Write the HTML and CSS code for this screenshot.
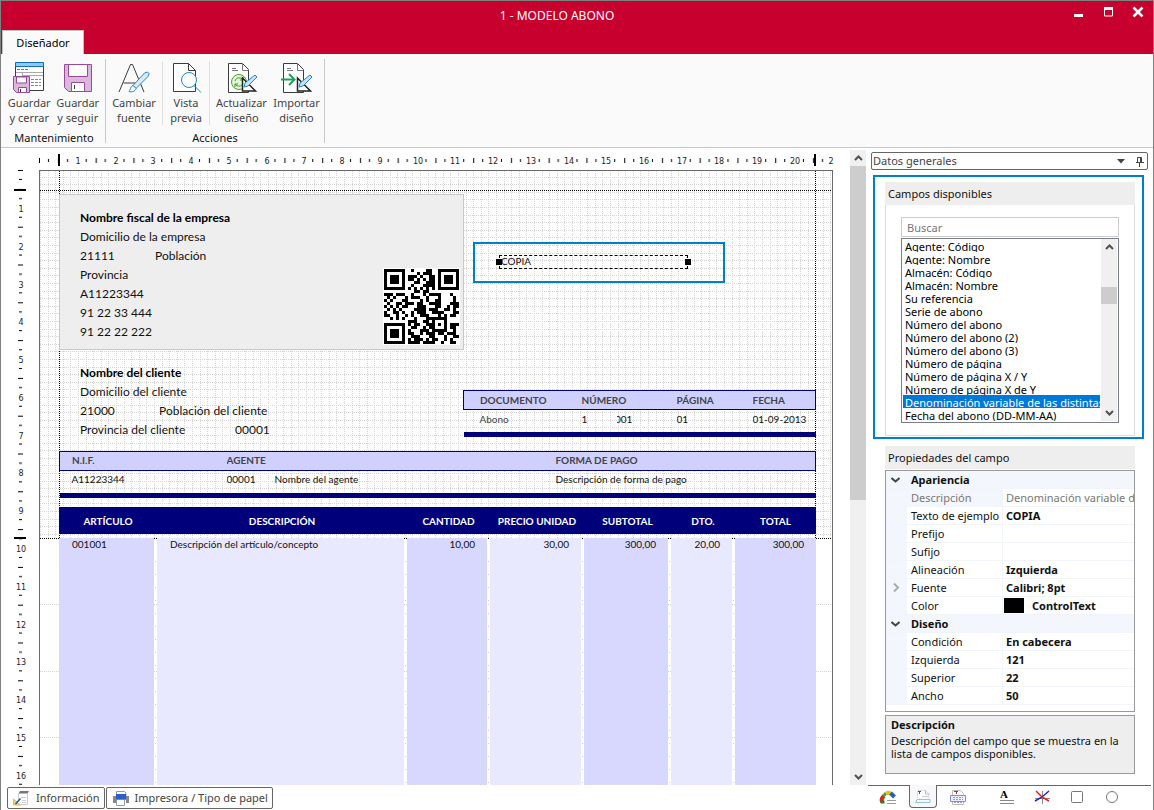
FILE: index.html
```html
<!DOCTYPE html>
<html lang="es">
<head>
<meta charset="utf-8">
<title>1 - MODELO ABONO</title>
<link rel="stylesheet" href="styles.css">
</head>
<body>
<div class="window">
  <header class="titlebar">
    <h1 class="title">1 - MODELO ABONO</h1>
    <div class="window-buttons">
      <button type="button" aria-label="Minimizar"><svg width="12" height="12"><path d="M2 9.500h9" stroke="#fff" stroke-width="3"/></svg></button>
      <button type="button" aria-label="Maximizar"><svg width="12" height="12"><path d="M2.500 3h8v7h-8z" stroke="#fff" fill="none"/><path d="M2 2.500h9" stroke="#fff" stroke-width="3"/></svg></button>
      <button type="button" aria-label="Cerrar"><svg width="12" height="12"><path d="M1.500 1.500l9 9M10.500 1.500l-9 9" stroke="#fff" stroke-width="2.500"/></svg></button>
    </div>
    <button type="button" class="ribbon-tab">Diseñador</button>
  </header>

  <nav class="ribbon">
    <section class="group">
      <div class="group-items">
        <button type="button" class="tool">
          <svg width="34" height="34" viewBox="0 0 34 34" fill="none"><path d="M3.500 2.500h28v27h-28z" fill="#fff" stroke="#3b3b3b"/><path d="M3.500 1.500h28v4h-28z" fill="#91c8f6" stroke="#1070b8"/><path d="M5 8.500h12" stroke="#777" stroke-dasharray="3 1"/><path d="M19 18.500h10M19 21.500h10M19 24.500h10" stroke="#888" stroke-dasharray="3 1"/><path d="M4 11.500h27M10 14.500h21M10.500 12v4" stroke="#aaa"/><path d="M1.500 15.500h16v16H4.500l-3-3z" fill="#dbb8db" stroke="#9b4a9b"/><path d="M4.500 16h10v6h-10zM6.500 26.500h8v5h-8z" fill="#fff" stroke="#9b4a9b"/><path d="M8.500 28v3" stroke="#3b3b3b"/></svg>
          <span>Guardar<br>y cerrar</span></button>
        <button type="button" class="tool">
          <svg width="34" height="34" viewBox="0 0 34 34" fill="none"><path d="M3.500 3.500h27v27H7.500l-4-4z" fill="#dbb8db" stroke="#9b4a9b"/><path d="M7.500 3.500h19v12h-19zM10.500 21.500h13v9h-13z" fill="#fff" stroke="#9b4a9b"/><path d="M13.500 24v4" stroke="#3b3b3b"/></svg>
          <span>Guardar<br>y seguir</span></button>
      </div>
      <h2 class="group-name">Mantenimiento</h2>
    </section>
    <section class="group actions">
      <div class="group-items">
        <button type="button" class="tool">
          <svg width="34" height="34" viewBox="0 0 34 34" fill="none"><path d="M2 31L13.500 3.500h2L27 31M6.500 22h16" stroke="#3b3b3b"/><path d="M27.500 12l3-1 1.500 1.500-1 3-12 12-3-3z" fill="#d6eafa" stroke="#2284cc"/><path d="M16 24.500l3 3c-1 3-4 4-7 3 1.500-1 1-5 4-6z" fill="#fff" stroke="#2284cc"/></svg>
          <span>Cambiar<br>fuente</span></button>
        <button type="button" class="tool split">
          <svg width="34" height="34" viewBox="0 0 34 34" fill="none"><path d="M26.500 30.500h-22v-28h15l7 7z" fill="#fff" stroke="#3b3b3b"/><path d="M19.500 2.500v7h7" stroke="#3b3b3b"/><circle cx="20" cy="19" r="7.500" fill="#fff" stroke="#2284cc"/><path d="M25 24.500l7 7" stroke="#2284cc"/></svg>
          <span>Vista<br>previa</span></button>
        <button type="button" class="tool split">
          <svg width="34" height="34" viewBox="0 0 34 34" fill="none"><path d="M3.500 2.500h14l6 6v23h-20z" fill="#fff" stroke="#3b3b3b"/><path d="M17.500 2.500v7h6M7 7.500h4m-4 2h6" stroke="#777"/><circle cx="14" cy="21" r="7.500" fill="#e2f6da" stroke="#4aa530"/><path d="M10 20c1-4 6-4 8-1m0-3v3h-3M18 22c-1 4-6 4-8 1m0 3v-3h3" stroke="#3b9a25"/><path d="M17.500 17v13h13z" fill="#fff" stroke="#222" stroke-width="1.500"/><path d="M30 14l2 2-9 9-4 1 1-4z" fill="#c8e2f8" stroke="#2284cc"/></svg>
          <span>Actualizar<br>diseño</span></button>
        <button type="button" class="tool">
          <svg width="34" height="34" viewBox="0 0 34 34" fill="none"><path d="M3.500 2.500h14l6 6v23h-20z" fill="#fff" stroke="#3b3b3b"/><path d="M17.500 2.500v7h6M7 7.500h4m-4 2h6" stroke="#777"/><path d="M1 18.500h13M9 13l5.500 5.500L9 24" stroke="#22a05a" stroke-width="2"/><path d="M17.500 17v13h13z" fill="#fff" stroke="#222" stroke-width="1.500"/><path d="M30 14l2 2-9 9-4 1 1-4z" fill="#c8e2f8" stroke="#2284cc"/></svg>
          <span>Importar<br>diseño</span></button>
      </div>
      <h2 class="group-name">Acciones</h2>
    </section>
  </nav>

  <main class="workspace">
    <section class="editor">
      <div class="viewport">
        <div class="sheet">
          <svg class="ruler-h" width="796" height="20" aria-hidden="true">
            <defs><pattern id="tick-h" width="37.750" height="20" patternUnits="userSpaceOnUse" x="0"><path d="M19 8h1v5h-1zM9 9h1v3H9zM28 9h1v3h-1z"/></pattern></defs>
            <rect x="0" width="794" height="20" fill="url(#tick-h)"/>
            <path d="M0 8h1v5H0zM19 4h2v12h-2zM775 4h2v12h-2z"/>
            <g text-anchor="middle"><text x="39" y="14">1</text><text x="77" y="14">2</text><text x="114" y="14">3</text><text x="152" y="14">4</text><text x="190" y="14">5</text><text x="228" y="14">6</text><text x="265" y="14">7</text><text x="303" y="14">8</text><text x="341" y="14">9</text><text x="379" y="14">10</text><text x="416" y="14">11</text><text x="454" y="14">12</text><text x="492" y="14">13</text><text x="530" y="14">14</text><text x="567" y="14">15</text><text x="605" y="14">16</text><text x="643" y="14">17</text><text x="680" y="14">18</text><text x="718" y="14">19</text><text x="756" y="14">20</text><text x="792" y="14">2</text></g>
          </svg>
          <svg class="ruler-v" width="39" height="640" aria-hidden="true">
            <defs><pattern id="tick-v" width="39" height="37.800" patternUnits="userSpaceOnUse"><path d="M17 19h5v1h-5zM18 9h3v1h-3zM18 28h3v1h-3z"/></pattern></defs>
            <rect width="39" height="640" fill="url(#tick-v)"/>
            <path d="M17 0h5v1h-5zM13 19h12v2H13zM13 367h12v2H13z"/>
            <g text-anchor="middle"><text x="20" y="42">1</text><text x="20" y="80">2</text><text x="20" y="118">3</text><text x="20" y="155">4</text><text x="20" y="193">5</text><text x="20" y="231">6</text><text x="20" y="269">7</text><text x="20" y="306">8</text><text x="20" y="344">9</text><text x="20" y="382">10</text><text x="20" y="420">11</text><text x="20" y="458">12</text><text x="20" y="495">13</text><text x="20" y="533">14</text><text x="20" y="571">15</text><text x="20" y="609">16</text></g>
          </svg>
          <div class="paper">
            <svg class="grid-lines" width="792" height="640" aria-hidden="true" shape-rendering="crispEdges">
              <defs>
                <pattern id="dots" width="38" height="38" patternUnits="userSpaceOnUse"><path d="M8.500 0v38M15.500 0v38M23.500 0v38M30.500 0v38M.5 0v38M0 6.500h38M0 13.500h38M0 21.500h38M0 28.500h38M0 36.500h38" stroke="#d4d4d4" stroke-dasharray="1 1"/></pattern>
                <pattern id="gutter" width="792" height="13" patternUnits="userSpaceOnUse"><path d="M115 0h1v1h-1zM365 0h1v1h-1zM448 0h1v1h-1zM542 0h1v1h-1zM629 0h1v1h-1zM693 0h1v1h-1z" fill="#ccc"/></pattern>
              </defs>
              <rect width="792" height="367" fill="url(#dots)"/>
              <rect y="380" width="792" height="260" fill="url(#gutter)"/>
              <path d="M0 433.500h792M0 500.500h792M0 566.500h792" stroke="#d4d4d4" stroke-dasharray="1 1"/>
              <path d="M0 19.500h792M0 367.500h792M19.500 0v640M775.500 0v640" stroke="#000" stroke-dasharray="1 1"/>
            </svg>

            <div class="item company">
              <div class="address">
                <b>Nombre fiscal de la empresa</b>
                <span>Domicilio de la empresa</span>
                <span class="pair"><span>21111</span><span>Población</span></span>
                <span>Provincia</span>
                <span>A11223344</span>
                <span>91 22 33 444</span>
                <span>91 22 22 222</span>
              </div>
              <svg class="qr" width="77" height="77" viewBox="-.33 -.33 25.66 25.66" shape-rendering="crispEdges" role="img" aria-label="Código QR">
                <path fill="#fff" d="M-1-1h27v27H-1z"/>
                <path fill="none" stroke="#000" d="M.5.5h6v6h-6zM18.500.5h6v6h-6zM.5 18.500h6v6h-6zM16.500 16.500h4v4h-4z"/>
                <path d="M2 2h3v3H2zM20 2h3v3h-3zM2 20h3v3H2zM18 18h1v1h-1z"/>
                <path fill="none" stroke="#000" d="M9 .5h1m4 0h2M11 1.500h1m1 0h3M8 2.500h3m1 0h1m2 0h2M8 3.500h2m1 0h1m1 0h1m1 0h2M10 4.500h2m2 0h3M9 5.500h1m3 0h4M8 6.500h1m1 0h1m1 0h1m1 0h1m1 0h1M10 7.500h2m1 0h2M0 8.500h3m1 0h3m2 0h1m3 0h1m1 0h4m3 0h1M1 9.500h1m1 0h1m3 0h1m1 0h3m2 0h1m3 0h1m4 0h1M0 10.500h1m1 0h1m3 0h2m4 0h1m1 0h1m2 0h2m4 0h1M1 11.500h1m2 0h2m1 0h3m1 0h2m2 0h4m3 0h3M0 12.500h1m1 0h1m1 0h1m1 0h2m3 0h3m3 0h2m2 0h1m1 0h2M1 13.500h1m1 0h1m1 0h1m4 0h4m1 0h3m2 0h2m1 0h1M0 14.500h1m2 0h2m1 0h1m2 0h1m1 0h3m2 0h4m3 0h2M0 15.500h2m2 0h1m2 0h1m1 0h1m2 0h3m3 0h1m1 0h1m1 0h2M2 16.500h1m1 0h1m1 0h1m3 0h1m3 0h2M8 17.500h3m2 0h2M8 18.500h1m1 0h2m2 0h2m6 0h3M9 19.500h2m2 0h1m1 0h1m6 0h2M8 20.500h1m3 0h3m8 0h1M8 21.500h2m2 0h1m1 0h3m1 0h2m1 0h3M9 22.500h3m3 0h2m3 0h1m2 0h2M8 23.500h1m1 0h3m1 0h1m1 0h2m2 0h1m1 0h1M8 24.500h4m1 0h4m2 0h1m2 0h2"/>
              </svg>
            </div>

            <div class="item customer address">
              <b>Nombre del cliente</b>
              <span>Domicilio del cliente</span>
              <span class="pair"><span>21000</span><span>Población del cliente</span></span>
              <span class="pair province"><span>Provincia del cliente</span><span>00001</span></span>
            </div>

            <div class="item highlight"><div class="field">COPIA</div></div>

            <table class="item doc">
              <thead><tr><th class="c-doc">DOCUMENTO</th><th class="c-num">NÚMERO</th><th class="c-page">PÁGINA</th><th>FECHA</th></tr></thead>
              <tbody><tr><td class="kind">Abono</td><td><span class="serial"><span>1</span><span class="clip"><span>001</span></span></span></td><td>01</td><td>01-09-2013</td></tr></tbody>
            </table>

            <table class="item payment">
              <thead><tr><th class="c-nif">N.I.F.</th><th class="c-agent">AGENTE</th><th>FORMA DE PAGO</th></tr></thead>
              <tbody><tr><td>A11223344</td><td><span class="agent"><span>00001</span><span>Nombre del agente</span></span></td><td>Descripción de forma de pago</td></tr></tbody>
            </table>

            <table class="item lines">
              <colgroup><col class="w-art"><col class="w-desc"><col class="w-qty"><col class="w-price"><col class="w-sub"><col class="w-dto"><col class="w-total"></colgroup>
              <thead><tr><th>ARTÍCULO</th><th>DESCRIPCIÓN</th><th>CANTIDAD</th><th>PRECIO UNIDAD</th><th>SUBTOTAL</th><th>DTO.</th><th>TOTAL</th></tr></thead>
              <tbody><tr><td><div>001001</div></td><td><div>Descripción del artículo/concepto</div></td><td><div>10,00</div></td><td><div>30,00</div></td><td><div>300,00</div></td><td><div>20,00</div></td><td><div>300,00</div></td></tr></tbody>
            </table>
          </div>
        </div>
        <div class="scrollbar">
          <button type="button" aria-label="Subir"><svg width="9" height="6"><path d="M1 5l3.500-3.500L8 5" fill="none" stroke="#505050" stroke-width="2"/></svg></button>
          <div class="track"><div class="thumb"></div></div>
          <button type="button" aria-label="Bajar"><svg width="9" height="6"><path d="M1 1l3.500 3.500L8 1" fill="none" stroke="#505050" stroke-width="2"/></svg></button>
        </div>
      </div>
      <footer class="footer">
        <button type="button"><svg width="18" height="18" fill="none"><path d="M7 2h9l-1.500 2.500h-9z" fill="#777"/><path d="M5.500 4v7M14.500 5v10.500h-7" stroke="#ccc"/><path d="M8 8.500h5M9 11.500h4M9 13.500h4" stroke="#ccc"/><path d="M.5 10v6h7z" fill="#f5d080" stroke="#e8b850"/><path d="M2.500 15l5-5.500" stroke="#15609c" stroke-width="1.500"/></svg>Información</button>
        <button type="button"><svg width="18" height="18" fill="none"><path d="M4.500 7V2.500h8L14 4v3M4.500 11v5.500h8V11" fill="#fff" stroke="#999"/><path d="M1 7h16v7h-3v-3H4v3H1z" fill="#888"/><path d="M4 5h10v5H4z" fill="#2860c8"/></svg>Impresora / Tipo de papel</button>
      </footer>
    </section>

    <aside class="side">
      <div class="side-body">
        <div class="caption"><span>Datos generales</span>
          <button type="button" aria-label="Opciones"><svg width="8" height="5"><path d="M0 0h8L4 4.500z" fill="#444"/></svg></button>
          <button type="button" aria-label="Anclar"><svg width="9" height="11"><path d="M2.500 6V1.500h4V6M1 6.500h8M4.500 7v4M5.500 1v5" fill="none" stroke="#444"/></svg></button>
        </div>
        <section class="fields-frame">
          <h2 class="panel-title">Campos disponibles</h2>
          <div class="fields-body">
            <input class="search" type="search" placeholder="Buscar" aria-label="Buscar">
            <div class="listbox">
              <select size="14" aria-label="Campos disponibles">
                <option>Agente: Código</option><option>Agente: Nombre</option><option>Almacén: Código</option><option>Almacén: Nombre</option><option>Su referencia</option><option>Serie de abono</option><option>Número del abono</option><option>Número del abono (2)</option><option>Número del abono (3)</option><option>Número de página</option><option>Número de página X / Y</option><option>Número de página X de Y</option><option selected>Denominación variable de las distintas copias</option><option>Fecha del abono (DD-MM-AA)</option>
              </select>
              <div class="scrollbar small">
                <button type="button" aria-label="Subir"><svg width="9" height="6"><path d="M1 5l3.500-3.500L8 5" fill="none" stroke="#505050" stroke-width="2"/></svg></button>
                <div class="track"><div class="thumb"></div></div>
                <button type="button" aria-label="Bajar"><svg width="9" height="6"><path d="M1 1l3.500 3.500L8 1" fill="none" stroke="#505050" stroke-width="2"/></svg></button>
              </div>
            </div>
          </div>
        </section>
        <section class="props">
          <h2 class="panel-title">Propiedades del campo</h2>
          <div class="prop-box">
            <table class="prop-grid">
              <colgroup><col class="p-mark"><col class="p-name"><col></colgroup>
              <tr class="cat"><td><svg width="9" height="6"><path d="M.5 1l4 3.500 4-3.500" fill="none" stroke="#444" stroke-width="2"/></svg></td><th colspan="2">Apariencia</th></tr>
              <tr class="off"><td></td><th>Descripción</th><td>Denominación variable de las</td></tr>
              <tr><td></td><th>Texto de ejemplo</th><td>COPIA</td></tr>
              <tr><td></td><th>Prefijo</th><td></td></tr>
              <tr><td></td><th>Sufijo</th><td></td></tr>
              <tr><td></td><th>Alineación</th><td>Izquierda</td></tr>
              <tr><td><svg width="9" height="9"><path d="M3 .5l4 4-4 4" fill="none" stroke="#aaa" stroke-width="2"/></svg></td><th>Fuente</th><td>Calibri; 8pt</td></tr>
              <tr><td></td><th>Color</th><td class="color-cell"><span class="color"><i class="swatch"></i>ControlText</span></td></tr>
              <tr class="cat"><td><svg width="9" height="6"><path d="M.5 1l4 3.500 4-3.500" fill="none" stroke="#444" stroke-width="2"/></svg></td><th colspan="2">Diseño</th></tr>
              <tr><td></td><th>Condición</th><td>En cabecera</td></tr>
              <tr><td></td><th>Izquierda</th><td>121</td></tr>
              <tr><td></td><th>Superior</th><td>22</td></tr>
              <tr><td></td><th>Ancho</th><td>50</td></tr>
            </table>
          </div>
          <div class="help"><b>Descripción</b><p>Descripción del campo que se muestra en la lista de campos disponibles.</p></div>
        </section>
      </div>
      <nav class="side-tabs">
        <button type="button" aria-label="Datos generales"><svg width="18" height="18" fill="none"><path d="M3 14c-1-3 0-4 2-6" stroke="#d8281c" stroke-width="4"/><path d="M3.500 15.500v-3" stroke="#20803c" stroke-width="4"/><path d="M4.500 8l2.500-3" stroke="#39a845" stroke-width="3"/><path d="M7 5.500c2-1 3-1 4.500 0" stroke="#f2bd22" stroke-width="4"/><path d="M11.500 5l4 4" stroke="#2463b4" stroke-width="4"/><path d="M8 12.500h9M8 15.500h9" stroke="#999"/></svg></button>
        <button type="button" class="current" aria-label="Cabecera"><svg width="18" height="18" fill="none"><path d="M3.500 11V3.500h8l3 3V11" fill="#fff" stroke="#ddd"/><path d="M4 4.500h3M5.500 4v3" stroke="#d02020"/><path d="M11.500 3v4h4" stroke="#bbb"/><path d="M8 9.500h6" stroke="#ccc"/><path d="M3 12.500h13v3H1.500z" fill="#f4f8fc" stroke="#8cc4ea"/></svg></button>
        <button type="button" aria-label="Cuerpo"><svg width="18" height="18" fill="none"><path d="M3.500 16.500v-14h8l3 3v11z" fill="#fff" stroke="#bbb"/><path d="M5 3.500h4M7.500 3v3" stroke="#d02020"/><path d="M1.500 7.500h15v6h-15z" fill="#eeeeff" stroke="#8888e8"/><path d="M4 9.500h10M4 11.500h10M5 14.500h8" stroke="#9999d8" stroke-dasharray="2 1"/></svg></button>
        <button type="button" class="gap" aria-label="Texto"><svg width="18" height="18"><text x="2" y="10">A</text><path d="M2 12.500h14M2 15.500h14" stroke="#888"/></svg></button>
        <button type="button" aria-label="Línea"><svg width="18" height="18" fill="none"><path d="M2 10.500h15M9.500 3v13" stroke="#888"/><path d="M2 13L9 9 16 3" stroke="#2020e0" stroke-width="1.500"/><path d="M3 3l6 6 7 4" stroke="#e82020" stroke-width="1.500"/></svg></button>
        <button type="button" aria-label="Rectángulo"><svg width="18" height="18"><rect x="3.500" y="3.500" width="11" height="11" rx="1" fill="none" stroke="#777"/></svg></button>
        <button type="button" aria-label="Elipse"><svg width="18" height="18"><circle cx="9" cy="9" r="5.500" fill="none" stroke="#777"/></svg></button>
      </nav>
    </aside>
  </main>
</div>
</body>
</html>
```
FILE: styles.css
```css
* { box-sizing: border-box; }
html, body { height: 100%; margin: 0; }
body { font: 11px/18px "Noto Sans", "Open Sans", sans-serif; color: #111; background: #fff; }
button { font: inherit; color: inherit; background: none; border: 0; padding: 0; }
h1, h2, p { margin: 0; font-weight: 400; }
svg { display: block; }
table { border-collapse: collapse; table-layout: fixed; }
th, td { padding: 0; text-align: left; font-weight: 400; white-space: nowrap; overflow: hidden; }

.window { height: 100vh; display: flex; flex-direction: column; border: 1px solid #808080; border-bottom: 0; overflow: hidden; }

.titlebar { height: 53px; flex: none; background: #c8002d; display: grid; grid-template-columns: 1fr auto 1fr; grid-template-rows: 29px 24px; }
.title { grid-column: 2; color: #fff; font-size: 12px; line-height: 30px; margin-right: 40px; }
.window-buttons { grid-column: 3; display: flex; gap: 18px; padding: 5px 9px 0 0; justify-content: flex-end; align-items: flex-start; }
.ribbon-tab { grid-column: 1; grid-row: 2; justify-self: start; width: 82px; margin-left: 1px; background: #fafafa; border: 1px solid #c0c0c0; border-bottom: 0; color: #000; }

.ribbon { height: 94px; flex: none; display: flex; padding: 5px 0 4px 2px; background: #fafafa; border-bottom: 1px solid #c8c8c8; }
.group { display: flex; flex-direction: column; justify-content: space-between; width: 103px; border-right: 1px solid #c8c8c8; }
.actions { width: 219px; }
.group-items { display: flex; height: 66px; padding: 2px 3px 0 2px; }
.actions .group-items { padding: 2px 0 0; }
.tool { flex: 1; display: flex; flex-direction: column; align-items: center; color: #444; line-height: 15px; white-space: nowrap; }
.actions .tool { flex: 0 0 53px; }
.actions .tool:first-child { flex-basis: 56px; }
.actions .split { flex-basis: 47px; border-left: 1px solid #e0e0e0; }
.actions .split + .split { flex-basis: 61px; padding-left: 3px; }
.group-name { font-size: 11px; line-height: 10px; text-align: center; }

.workspace { flex: 1; min-height: 0; display: flex; }
.editor { flex: 1; min-width: 0; display: flex; flex-direction: column; }
.viewport { flex: 1; min-height: 0; display: flex; justify-content: space-between; padding-top: 2px; }
.sheet { display: grid; grid-template-columns: 38px auto; grid-template-rows: 20px auto; overflow: hidden; }
.ruler-h { grid-column: 2; }
.ruler-v { grid-column: 1; grid-row: 2; }
.ruler-h text, .ruler-v text { font: 8px "DejaVu Sans", sans-serif; fill: #222; }

/* A4 sheet: canvas whose items are placed by their report coordinates */
.paper { position: relative; width: 794px; height: 1123px; border: 1px solid #6a6a6a; font: 12px/19px Lato, sans-serif; }
.grid-lines { position: absolute; left: 0; top: 0; }
.item { position: absolute; }
.address { display: flex; flex-direction: column; color: #111; }
.address b { color: #000; }
.pair { display: flex; white-space: nowrap; }
.pair span:first-child { width: 79px; }
.company { left: 19px; top: 23px; width: 405px; height: 156px; display: flex; justify-content: space-between; align-items: flex-end; background: #eee; border: 1px solid #c8c8c8; padding: 0 3px 4px 20px; }
.company .address { align-self: flex-start; padding-top: 13px; }
.company .pair span:first-child { width: 75px; }
.customer { left: 40px; top: 192px; }
.customer .province span:first-child { width: 155px; }
.highlight { left: 433px; top: 71px; width: 252px; height: 41px; border: 2px solid #0080c8; padding: 11px 35px 13px 24px; }
.field { position: relative; height: 14px; border: 1px dashed #000; font-size: 10px; line-height: 11px; padding-left: 1px; }
.field::before, .field::after { content: ""; position: absolute; top: 3px; width: 6px; height: 6px; background: #000; }
.field::before { left: -4px; }
.field::after { right: -4px; }

.doc, .payment { font-size: 10px; line-height: 18px; }
.doc thead, .payment thead { background: #d0d0ff; border: 1px solid #00007b; }
.doc th, .payment th { font-weight: 700; color: #444; height: 19px; }
.doc tbody, .payment tbody { border-bottom: 5px solid #00007b; }
.doc td, .payment td { height: 24px; padding-bottom: 4px; }
.doc { left: 423px; top: 219px; width: 353px; }
.doc th:first-child, .doc td:first-child { padding-left: 16px; }
.kind { color: #444; }
.c-doc { width: 118px; }
.c-num { width: 95px; }
.c-page { width: 76px; }
.serial { display: flex; gap: 30px; }
.clip { width: 15px; overflow: hidden; display: flex; justify-content: flex-end; }
.payment { left: 19px; top: 280px; width: 757px; line-height: 17px; }
.payment th:first-child, .payment td:first-child { padding-left: 12px; }
.payment th { padding-bottom: 1px; }
.payment td { height: 23px; padding-bottom: 5px; }
.c-nif { width: 167px; }
.c-agent { width: 329px; }
.agent { display: flex; gap: 19px; }

.lines { left: 19px; top: 336px; width: 757px; font-size: 10px; line-height: 12px; }
.lines th { height: 27px; text-align: center; font-weight: 700; color: #fff; background: #00007b; padding-top: 1px; }
.lines td { padding: 4px 3px 0 0; }
.lines td:last-child { padding-right: 0; }
.lines td div { height: 590px; background: #d8d8ff; text-align: right; padding: 0 12px 0 13px; }
.lines td:nth-child(even) div { background: #e8e8ff; }
.lines td:nth-child(-n+2) div { text-align: left; }
.w-art { width: 98px; } .w-desc { width: 250px; } .w-qty { width: 83px; } .w-price { width: 94px; } .w-sub { width: 87px; } .w-dto { width: 64px; }

.scrollbar { flex: none; width: 16px; display: flex; flex-direction: column; background: #f0f0f0; }
.scrollbar button { flex: none; height: 16px; display: flex; justify-content: center; align-items: center; }
.track { flex: 1; }
.thumb { height: 334px; background: #cdcdcd; }
.footer { flex: none; height: 25px; padding: 2px 6px 1px; display: flex; gap: 1px; }
.footer button { display: flex; align-items: center; gap: 5px; padding: 0 4px 0 5px; border: 1px solid #666; border-radius: 2px; color: #444; }

.side { flex: none; width: 287px; display: flex; flex-direction: column; }
.side-body { flex: 1; min-height: 0; padding: 4px 5px 0 4px; }
.caption { height: 18px; display: flex; align-items: center; gap: 10px; margin-left: 1px; padding: 0 3px 0 1px; border: 1px solid #666; border-radius: 2px; color: #444; }
.caption span { flex: 1; }
.panel-title { height: 23px; line-height: 24px; padding-left: 3px; background: #eee; font-size: 11px; }
.fields-frame { margin: 5px 4px 0 3px; height: 264px; padding: 5px 7px 1px 10px; border: 2px solid #0080c8; display: flex; flex-direction: column; }
.fields-body { flex: 1; border: 1px solid #ddd; border-top: 0; padding: 12px 15px 0; }
.search { display: block; width: 100%; height: 20px; border: 1px solid #ccc; padding: 0 5px; font: inherit; outline: 0; -webkit-appearance: none; appearance: none; }
.search::placeholder { color: #777; }
.listbox { height: 185px; margin-top: 1px; display: flex; border: 1px solid #7a7f88; padding: 0 1px 1px; }
.listbox select { flex: 1; min-width: 0; border: 0; padding: 0; outline: 0; font: inherit; overflow: hidden; scrollbar-width: none; border-radius: 0; }
.listbox option { height: 13px; min-height: 13px; line-height: 13px; padding: 0 2px; color: #000; overflow: hidden; font-size: 11px; }
.listbox option:checked { background: #0078d7 linear-gradient(#0078d7, #0078d7); color: #fff; -webkit-text-fill-color: #fff; }
.small { margin-left: 1px; }
.small .track { padding-top: 32px; }
.small .thumb { height: 17px; }

.props { margin: 7px 13px 0 15px; }
.props .panel-title { border-bottom: 1px solid #fff; height: 24px; }
.prop-box { height: 242px; border: 1px solid #999; overflow: hidden; }
.prop-grid { width: 100%; border-collapse: separate; border-spacing: 0; }
.prop-grid td, .prop-grid th { height: 18px; line-height: 17px; border-bottom: 1px solid #f1f4fa; }
.prop-grid td:first-child { background: #f3f6fc; padding-left: 5px; }
.prop-grid th { padding-left: 4px; }
.prop-grid td:last-child { padding-left: 3px; font-weight: 700; border-left: 1px solid #f1f4fa; }
.prop-grid .cat td, .prop-grid .cat th { background: #f3f6fc; font-weight: 700; }
.prop-grid .off th, .prop-grid .off td { color: #777; font-weight: 400; }
.prop-grid .off th { background: #f3f6fc; }
.prop-grid .color-cell:last-child { padding-left: 1px; }
.color { display: flex; align-items: center; gap: 8px; }
.swatch { width: 20px; height: 15px; background: #000; }
.p-mark { width: 21px; }
.p-name { width: 95px; }
.help { height: 59px; margin-top: 3px; padding: 0 5px; background: #eee; border: 1px solid #999; }
.help p { line-height: 13px; }

.side-tabs { flex: none; height: 25px; display: flex; align-items: flex-start; gap: 7px; margin: 0 2px 0 2px; padding-left: 6px; border-top: 1px solid #666; }
.side-tabs button { width: 28px; height: 22px; padding-left: 5px; }
.side-tabs .current { height: 23px; margin-top: -1px; padding-left: 4px; border: 1px solid #666; border-top: 0; border-radius: 0 0 4px 4px; background: #f8f8fc; }
.side-tabs .gap { margin-left: 14px; }
.side-tabs text { font: bold 11px "Liberation Serif", serif; }
```
